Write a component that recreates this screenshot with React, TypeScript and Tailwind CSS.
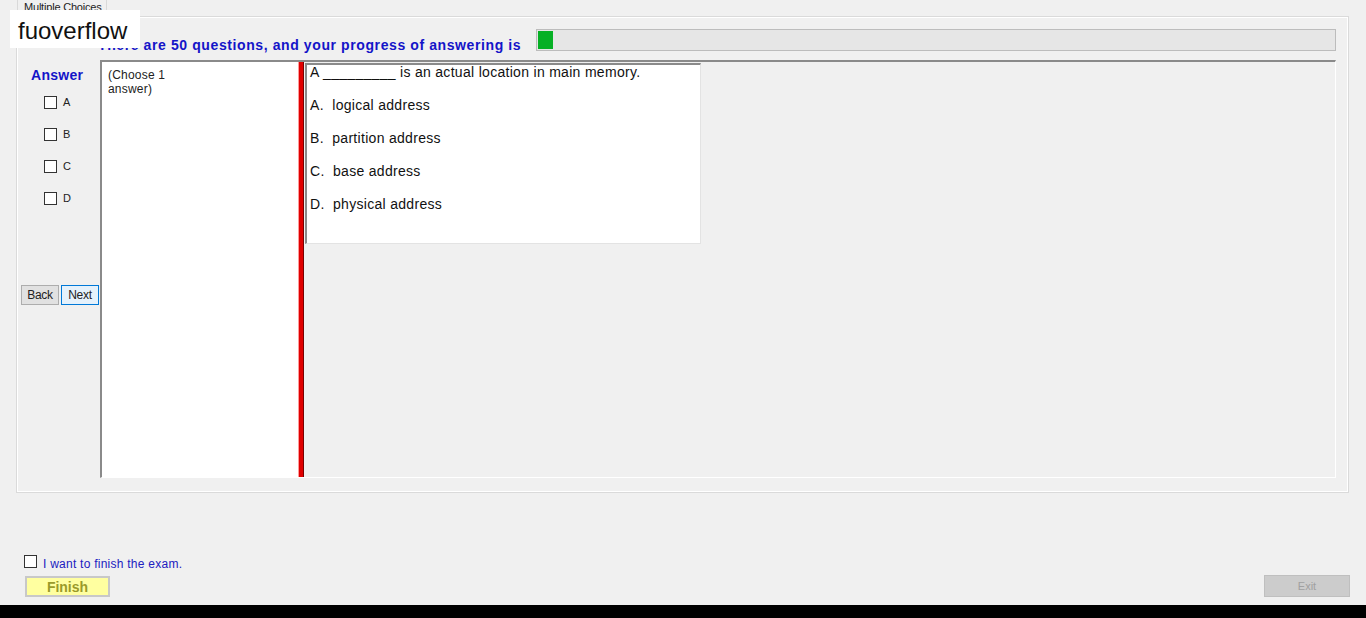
import React from 'react';

const options = [
  { key: 'A.', text: 'logical address' },
  { key: 'B.', text: 'partition address' },
  { key: 'C.', text: 'base address' },
  { key: 'D.', text: 'physical address' },
];

const Box = () => (
  <span className="block w-[13px] h-[13px] bg-white border border-[#333333] shrink-0"></span>
);

export default function App() {
  return (
    <div className="w-[1366px] h-[618px] bg-[#f0f0f0] flex flex-col relative overflow-hidden font-['Liberation_Sans',Arial,sans-serif] text-black">
      <div className="h-[605px] flex flex-col">
        {/* tab header */}
        <div className="h-[16px] pl-[17px] flex">
          <div className="w-[90px] h-[16px] border-x border-[#d9d9d9] text-[11px] leading-[12px] tracking-[-0.2px] text-[#222] pl-[6px] pt-[1px]">
            Multiple Choices
          </div>
        </div>

        {/* tab page */}
        <div className="ml-[16px] w-[1333px] h-[477px] border border-[#dadada] shadow-[inset_1px_1px_0_#ffffff,inset_-1px_-1px_0_#ffffff] flex flex-col pl-[3px] pr-[12px]">
          <div className="flex items-center h-[22px] mt-[12px]">
            <div className="w-[78px]"></div>
            <span className="text-[14px] leading-[16px] mt-[9px] font-bold tracking-[0.6px] text-[#1414c8] whitespace-nowrap">
              There are 50 questions, and your progress of answering is
            </span>
            <div className="ml-[15px] flex-1 h-[22px] bg-[#e6e6e6] border border-[#bcbcbc] p-[1px] flex">
              <div className="w-[15px] h-full bg-[#06b025]"></div>
            </div>
          </div>

          <div className="flex mt-[9px] h-[418px]">
            {/* answer column */}
            <div className="w-[80px] flex flex-col shrink-0">
              <span className="pl-[11px] pt-[7px] text-[14px] leading-[16px] font-bold tracking-[0.3px] text-[#1414c8]">Answer</span>
              <div className="flex flex-col gap-[19px] mt-[13px] pl-[24px]">
                {['A', 'B', 'C', 'D'].map((l) => (
                  <div key={l} className="flex items-center gap-[6px] h-[13px]">
                    <Box />
                    <span className="text-[11px] leading-[13px] text-[#222]">{l}</span>
                  </div>
                ))}
              </div>
              <div className="flex gap-[2px] ml-[1px] mt-[80px]">
                <button className="w-[38px] h-[20px] bg-[#e1e1e1] border border-[#adadad] text-[12px] leading-[18px] text-[#222] tracking-[-0.3px]">
                  Back
                </button>
                <button className="w-[38px] h-[20px] bg-[#e5f1fb] border border-[#0078d7] text-[12px] leading-[18px] text-[#222] tracking-[-0.3px]">
                  Next
                </button>
              </div>
            </div>

            {/* split container */}
            <div className="flex flex-1 border-t-2 border-l-2 border-t-[#8a8a8a] border-l-[#8a8a8a] border-b border-r border-b-white border-r-white">
              <div className="w-[196px] bg-white pl-[6px] pt-[6px] text-[12px] leading-[14px] tracking-[0.2px] text-[#222]">
                (Choose 1<br />answer)
              </div>
              <div className="w-[6px] bg-[#e00000] border-l border-l-[#ff9a9a] border-r border-r-[#7a0000]"></div>
              <div className="flex-1 pl-[1px] pt-[1px]">
                <div className="w-[396px] h-[181px] bg-white border-t-2 border-l-2 border-t-[#8a8a8a] border-l-[#8a8a8a] border-r border-b border-r-[#e3e3e3] border-b-[#e3e3e3] pl-[3px] text-[14px] tracking-[0.3px] text-[#111]">
                  <div className="leading-[16px] -mt-[1px]">A _________ is an actual location in main memory.</div>
                  {options.map((o) => (
                    <div key={o.key} className="leading-[16px] mt-[17px]">
                      {o.key}&nbsp; {o.text}
                    </div>
                  ))}
                </div>
              </div>
            </div>
          </div>
        </div>

        {/* bottom */}
        <div className="flex items-end justify-between flex-1 pb-[8px]">
          <div className="flex flex-col pl-[24px]">
            <div className="flex items-center gap-[6px]">
              <Box />
              <span className="text-[12px] leading-[14px] tracking-[0.25px] text-[#2020c0] mt-[5px]">I want to finish the exam.</span>
            </div>
            <button className="mt-[5px] ml-[1px] w-[85px] h-[21px] bg-[#ffffa0] border-2 border-[#c8c8c8] text-[14px] font-bold leading-[16px] text-[#9a9a2a]">
              Finish
            </button>
          </div>
          <button className="mr-[16px] w-[86px] h-[22px] bg-[#cccccc] border border-[#bfbfbf] text-[11px] text-[#a0a0a0] mb-0">
            Exit
          </button>
        </div>
      </div>
      <div className="h-[13px] bg-black"></div>

      {/* watermark label */}
      <div className="absolute left-[10px] top-[10px] w-[130px] h-[38px] bg-white pl-[8px] text-[24px] leading-[42px] text-[#111]">
        fuoverflow
      </div>
    </div>
  );
}
